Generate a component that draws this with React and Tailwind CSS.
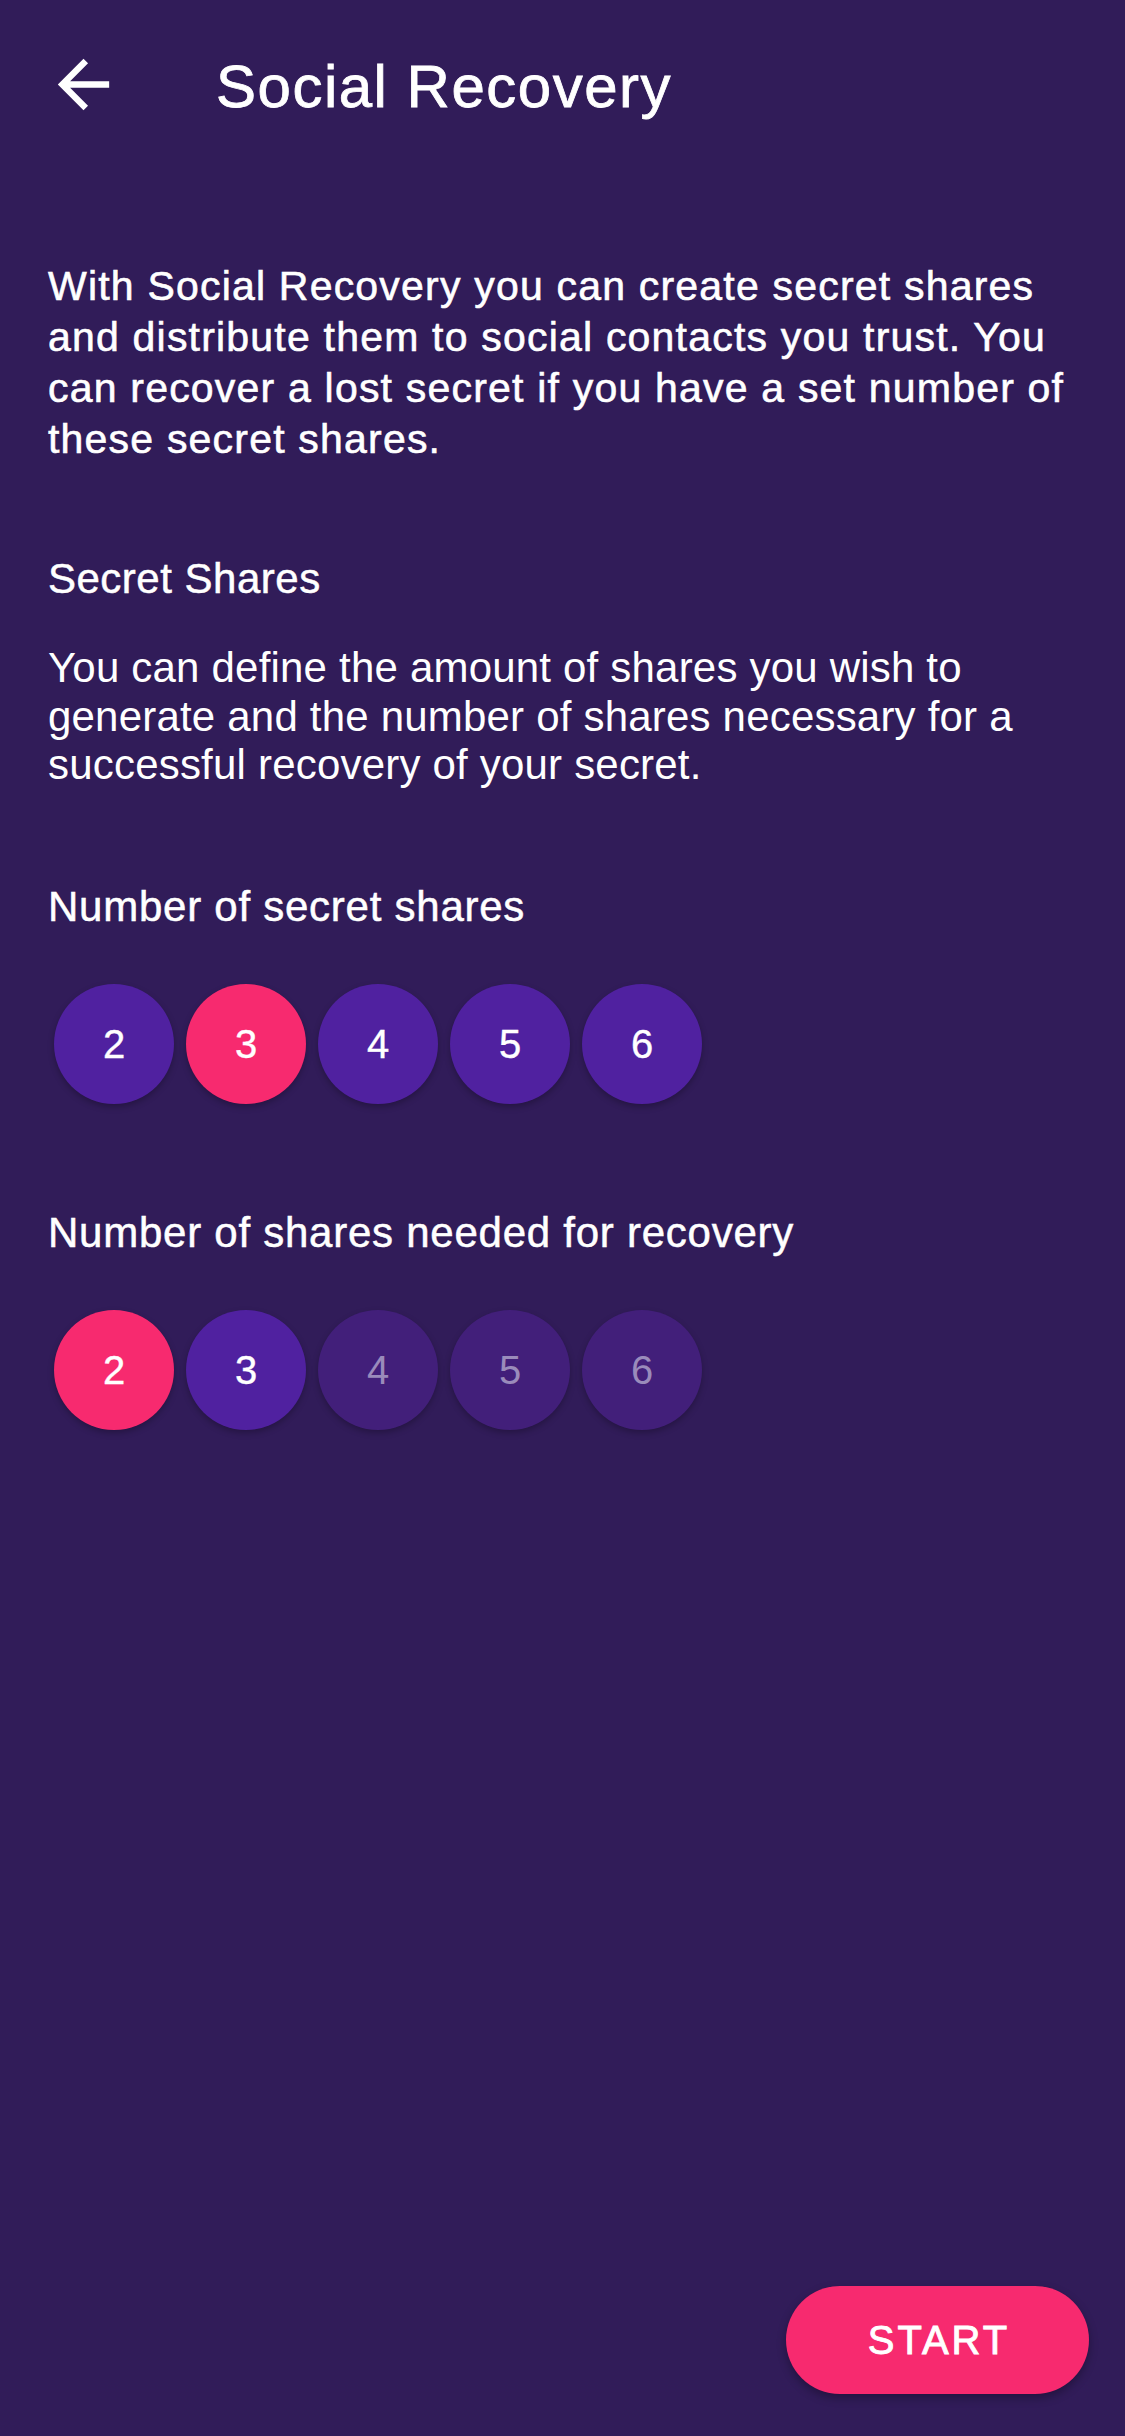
import React, { useState } from 'react';

const font = "font-['Liberation_Sans',Arial,sans-serif]";

const introLines = [
  'With Social Recovery you can create secret shares',
  'and distribute them to social contacts you trust. You',
  'can recover a lost secret if you have a set number of',
  'these secret shares.',
];

const sharesLines = [
  'You can define the amount of shares you wish to',
  'generate and the number of shares necessary for a',
  'successful recovery of your secret.',
];

const options = [2, 3, 4, 5, 6];

const ArrowBack = () => (
  <svg viewBox="0 0 24 24" className="w-[77px] h-[77px] shrink-0" fill="#ffffff">
    <path d="M20 11H7.83l5.59-5.59L12 4l-8 8 8 8 1.41-1.41L7.83 13H20v-2z" />
  </svg>
);

const NumberPicker = ({ value, onChange, maxEnabled }) => (
  <div className="flex gap-[12px] pl-[54px]">
    {options.map((n) => {
      const selected = n === value;
      const disabled = maxEnabled !== undefined && n > maxEnabled;

      let circleClass =
        'w-[120px] h-[120px] rounded-full flex items-center justify-center text-[40px] leading-none shadow-[0_3px_6px_rgba(0,0,0,0.25)] ';
      if (selected) {
        circleClass += 'bg-[#f72a6f] text-white [-webkit-text-stroke:0.4px_#ffffff]';
      } else if (disabled) {
        circleClass += 'bg-[#421f7a] text-[#9a8bbb]';
      } else {
        circleClass += 'bg-[#5021a0] text-white [-webkit-text-stroke:0.4px_#ffffff]';
      }

      return (
        <button
          key={n}
          disabled={disabled}
          onClick={() => onChange(n)}
          className={circleClass}
        >
          {n}
        </button>
      );
    })}
  </div>
);

export default function App() {
  const [total, setTotal] = useState(3);
  const [needed, setNeeded] = useState(2);

  const handleTotal = (n) => {
    setTotal(n);
    if (needed > n) setNeeded(n);
  };

  return (
    <div className={`min-h-screen w-full bg-[#311c59] text-white flex flex-col ${font}`}>
      {/* Header */}
      <div className="flex items-start pt-[46px] pl-[45px]">
        <ArrowBack />
        <h1 className="ml-[94px] mt-[11px] text-[60px] leading-[60px] tracking-[1.5px] [-webkit-text-stroke:0.8px_#ffffff]">
          Social Recovery
        </h1>
      </div>

      {/* Intro */}
      <div className="pl-[48px] mt-[138px] text-[41px] leading-[51px] tracking-[1.2px] [-webkit-text-stroke:0.6px_#ffffff]">
        {introLines.map((line) => (
          <div key={line} className="whitespace-nowrap">{line}</div>
        ))}
      </div>

      {/* Secret shares */}
      <h2 className="pl-[48px] mt-[89px] text-[42px] leading-[50px] tracking-[0.5px] [-webkit-text-stroke:0.5px_#ffffff]">
        Secret Shares
      </h2>
      <div className="pl-[48px] mt-[40px] text-[42px] leading-[48.5px] tracking-[0.2px]">
        {sharesLines.map((line) => (
          <div key={line} className="whitespace-nowrap">{line}</div>
        ))}
      </div>

      <h2 className="pl-[48px] mt-[92px] text-[42px] leading-[50px] tracking-[0.75px] [-webkit-text-stroke:0.5px_#ffffff]">
        Number of secret shares
      </h2>
      <div className="mt-[52px]">
        <NumberPicker value={total} onChange={handleTotal} />
      </div>

      <h2 className="pl-[48px] mt-[104px] text-[42px] leading-[50px] tracking-[0.75px] [-webkit-text-stroke:0.5px_#ffffff]">
        Number of shares needed for recovery
      </h2>
      <div className="mt-[52px]">
        <NumberPicker value={needed} onChange={setNeeded} maxEnabled={total} />
      </div>

      {/* Start */}
      <button className="mt-auto self-end mr-[36px] mb-[42px] w-[303px] h-[108px] rounded-full bg-[#f72a6f] text-white text-[40px] leading-none tracking-[3px] pl-[3px] flex items-center justify-center shadow-[0_4px_10px_rgba(0,0,0,0.3)] [-webkit-text-stroke:0.9px_#ffffff]">
        START
      </button>
    </div>
  );
}
